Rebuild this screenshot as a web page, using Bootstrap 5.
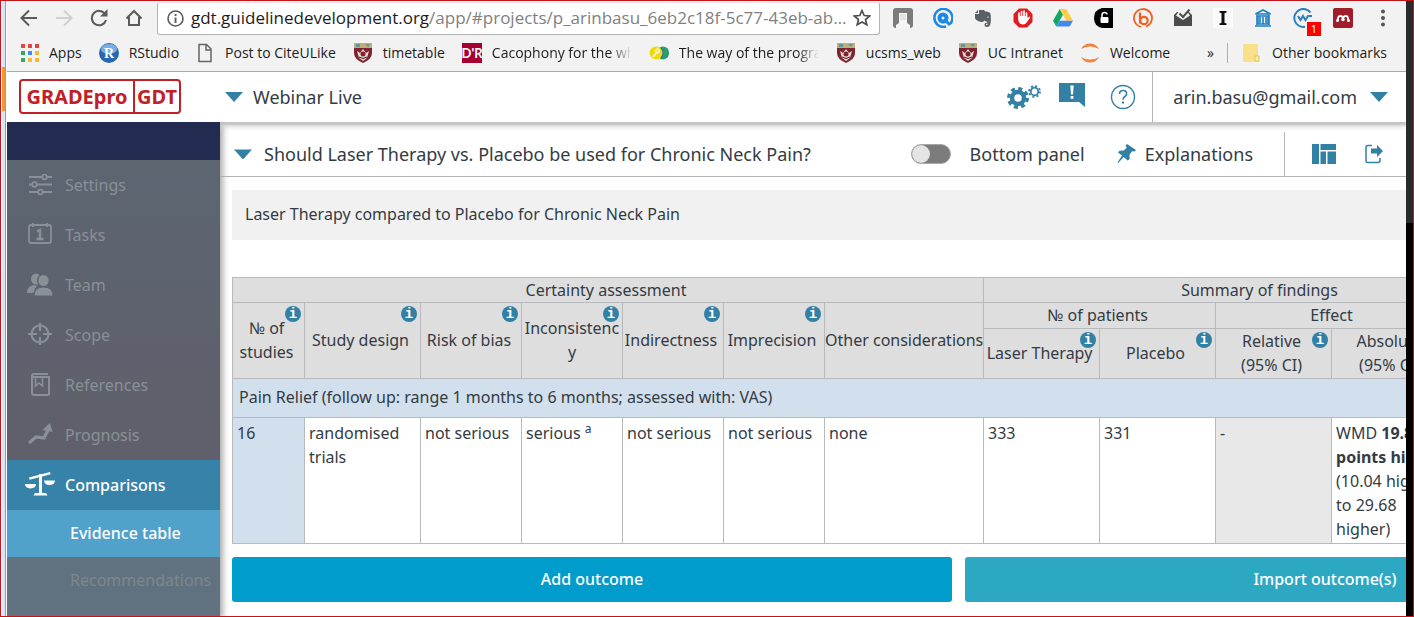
<!DOCTYPE html>
<html lang="en">
<head>
<meta charset="utf-8">
<meta name="viewport" content="width=device-width, initial-scale=1">
<title>GRADEpro GDT</title>
<link rel="stylesheet" href="https://cdn.jsdelivr.net/npm/bootstrap@5.3.0/dist/css/bootstrap.min.css">
<style>
  :root { --teal: #3380a5; --ink: #333b44; --line: #b5b5b5; }
  body { font: 16px/24px "Noto Sans", "Open Sans", sans-serif; color: var(--ink); border: 1px solid #c4141c; background: #fff; }
  button { font: inherit; color: inherit; border: 0; background: none; padding: 0; }
  a { color: inherit; text-decoration: none; }
  svg { display: block; flex: none; }
  .desk-left { width: 6px; flex: none; background: linear-gradient(90deg, #fff 0 1px, #d9e4f4 1px 4px, #9a9aa0 4px 5px, #fff 5px); position: relative; }
  .desk-left::before { content: ""; position: absolute; left: 1px; top: 66px; width: 3px; height: 44px; background: #ef9a3a; }
  .desk-right { width: 7px; flex: none; background: linear-gradient(#2a2a2c 0 222px, #000 222px); }

  .chrome-bar { background: #f2f2f2; border-bottom: 1px solid #a9a9a9; color: #1c1c1c; font-family: "Open Sans", sans-serif; }
  .tool-row { height: 34px; padding: 0 3px 0 5px; }
  .nav-btn { width: 35px; height: 32px; }
  .ext-btn { width: 40px; height: 32px; position: relative; }
  .ext-count { position: absolute; left: 24px; top: 20px; width: 14px; height: 14px; background: #f00; color: #fff; font-size: 11px; line-height: 14px; }
  .url-box { height: 33px; margin: 0 3px 0 5px; padding: 0 8px 0 9px; background: #fff; border: 1px solid #b4b4b4; border-top-color: #e4e4e4; border-radius: 3px; font-size: 17px; gap: 7px; }
  .url-rest { color: #808080; }
  .mark-row { height: 36px; padding: 0 19px 0 14px; font-size: 14px; }
  .mark-list { gap: 17px; }
  .mark-list a { gap: 10px; white-space: nowrap; }
  .fade-name { width: 140px; overflow: hidden; -webkit-mask-image: linear-gradient(90deg, #000 118px, transparent 140px); mask-image: linear-gradient(90deg, #000 118px, transparent 140px); }
  .mark-sep { width: 1px; height: 20px; background: #b0b0b0; margin: 0 14px 0 13px; }

  .app-head { height: 50px; position: relative; z-index: 2; background: #fff; box-shadow: 0 3px 2px #c4c4c4, 0 5px 5px #ddd; font-size: 18px; }
  .brand-box { margin-left: 12px; width: 162px; height: 35px; border: 2px solid #c02026; border-radius: 4px; color: #c02026; font-weight: 700; font-size: 20px; line-height: 31px; text-align: center; }
  .brand-box span:last-child { border-left: 2px solid #c02026; width: 46px; }
  .project { margin-left: 44px; gap: 10px; }
  .down-tri { width: 18px; height: 10px; background: var(--teal); clip-path: polygon(0 0, 100% 0, 50% 100%); flex: none; }
  .account { border-left: 1px solid var(--line); padding: 0 18px 0 20px; gap: 13px; }

  .side { width: 213px; flex: none; position: relative; z-index: 3; background: linear-gradient(#5b6671, #5f606c 300px); color: #8a9097; box-shadow: 3px 3px 6px #aaa; }
  .side-top { height: 38px; background: #232c50; }
  .side-item { height: 50px; padding-left: 19px; gap: 11px; }
  .side-item svg { width: 28px; }
  .side-sub { height: 47px; padding-left: 63px; }
  .side .on { background: #3682a8; color: #fff; }
  .side .on-sub { background: #51a2ca; color: #fff; }
  .side-tail { background: #60727f; color: #7d868d; flex: 1; }
  .mid { font-weight: 500; }

  .title-row { height: 55px; border-bottom: 1px solid var(--line); padding: 0 20px 0 14px; font-size: 18px; }
  .title-row > button, .title-row > .form-switch { padding-top: 11px; }
  .split { width: 1px; height: 44px; background: var(--line); align-self: flex-end; margin: 0 27px 0 31px; }
  .pin-btn { margin-left: 28px; }
  .panel-name { padding-left: 19px; }
  .form-switch .form-check-input.panel-switch { width: 40px; height: 20px; margin: 0; border: 1px solid #a8a8a8; background-color: #7c7c7c; background-image: url("data:image/svg+xml,%3Csvg xmlns='http://www.w3.org/2000/svg' viewBox='-4 -4 8 8'%3E%3Ccircle r='4' fill='%23e4e4e4'/%3E%3C/svg%3E"); }
  .canvas { padding: 13px 0 15px 12px; width: max-content; }
  .question { height: 50px; background: #f1f1f1; padding: 0 13px 2px; }
  .ev-table { table-layout: fixed; width: 1308px; margin: 37px 0 13px; border-collapse: collapse; }
  .ev-table th, .ev-table td { border: 1px solid #b7babd; }
  .ev-table th { background: #dedede; font-weight: 400; text-align: center; padding: 0 5px 0 1px; position: relative; }
  .ev-table td { padding: 3px 4px 2px; height: 126px; vertical-align: top; }
  .ev-table .outcome td { height: 39px; padding: 0 6px 2px; vertical-align: middle; background: #d2dfec; }
  .ev-table .r-a th { height: 25px; }
  .ev-table .r-b th { height: 26px; }
  .ev-table .r-c th { height: 50px; }
  .ev-table th.brk { word-break: break-all; padding: 0 2px; }
  .ev-table td.study-count { background: #d2dfec; }
  .ev-table td.no-effect { background: #e8e8e8; }
  .tip { position: absolute; top: 3px; right: 3px; width: 16px; height: 16px; border-radius: 50%; background: var(--teal); color: #fff; font: 700 14px/16px "Liberation Mono", monospace; }
  .ev-table sup { font-size: 12px; }
  .btn-line { gap: 13px; }
  .big-btn { width: 720px; height: 45px; border-radius: 3px; color: #fff; background: #009ccb; }
  .big-btn.alt { background: #2ca8c2; }
</style>
</head>
<body class="d-flex vh-100 overflow-hidden">
<svg width="0" height="0" class="position-absolute" aria-hidden="true">
  <symbol id="crest" viewBox="0 0 20 20">
    <path d="M1 0h18v10q0 6-9 10Q1 16 1 10z" fill="#7e2430"/><path d="M1 0h18v5H1z" fill="#c2ad72"/><path d="M3 1h4v3H3zM12 1h5l-2 3z" fill="#5d9aa0"/>
    <path d="M4 8l3 2 3-4 3 4 3-2-2 7-4 3-4-3z" fill="#ead8d0"/><circle cx="10" cy="11" r="2.5" fill="#7e2430"/><path d="M6 14q4 3 8 0" stroke="#4b1922" fill="none"/>
  </symbol>
</svg>
<div class="desk-left"></div>
<div class="d-flex flex-column flex-grow-1 overflow-hidden">

  <div class="chrome-bar">
    <div class="tool-row d-flex align-items-center">
      <button class="nav-btn d-flex align-items-center justify-content-center" aria-label="Back"><svg width="18" height="18" viewBox="0 0 18 18" fill="none" stroke="#5a5a5a" stroke-width="2"><path d="M17 9H2M9 1.500L1.500 9 9 16.500"/></svg></button>
      <button class="nav-btn d-flex align-items-center justify-content-center" aria-label="Forward"><svg width="18" height="18" viewBox="0 0 18 18" fill="none" stroke="#d0d0d0" stroke-width="2"><path d="M1 9h15M9 1.500L16.500 9 9 16.500"/></svg></button>
      <button class="nav-btn d-flex align-items-center justify-content-center" aria-label="Reload"><svg width="18" height="18" viewBox="0 0 18 18"><path d="M15 5A7.200 7.200 0 1 0 16 11" fill="none" stroke="#5a5a5a" stroke-width="2"/><path d="M17.500 0v7.500H10z" fill="#5a5a5a"/></svg></button>
      <button class="nav-btn d-flex align-items-center justify-content-center" aria-label="Home"><svg width="18" height="18" viewBox="0 0 18 18" fill="none" stroke="#5a5a5a" stroke-width="2"><path d="M1.500 9.500L9 2l7.500 7.500M4 8v8h10V8"/></svg></button>
      <div class="url-box d-flex align-items-center flex-grow-1 overflow-hidden">
        <svg width="17" height="17" viewBox="0 0 17 17"><circle cx="8.500" cy="8.500" r="7.500" fill="none" stroke="#5a5a5a" stroke-width="1.600"/><path d="M7.600 7.500h1.900V13H7.600zM7.600 4h1.900v2H7.600z" fill="#5a5a5a"/></svg>
        <div class="flex-grow-1 text-nowrap">gdt.guidelinedevelopment.org<span class="url-rest">/app/#projects/p_arinbasu_6eb2c18f-5c77-43eb-ab…</span></div>
        <svg width="18" height="18" viewBox="0 0 18 18" fill="none" stroke="#4d4d4d" stroke-width="1.700"><path d="M9 1.500l2.200 5 5.400.5-4.100 3.500 1.300 5.300L9 13l-4.800 2.800 1.300-5.300L1.400 7l5.400-.5z"/></svg>
      </div>
      <button class="ext-btn d-flex align-items-center justify-content-center" aria-label="Archive"><svg width="20" height="20" viewBox="0 0 20 20"><rect width="20" height="20" rx="3" fill="#7b7b7b"/><path d="M3 20v-3l3-2V5h8v10l3 2v3z" fill="#f5f5f5"/><path d="M7 6h6v6H7z" fill="#e2e2e2"/></svg></button>
      <button class="ext-btn d-flex align-items-center justify-content-center" aria-label="Search"><svg width="20" height="20" viewBox="0 0 20 20" fill="none" stroke="#1c88e5"><path d="M17 16a9 9 0 1 0-4 2.500" stroke-width="2.500"/><circle cx="10" cy="10" r="3.500" stroke-width="4"/><path d="M12 12l5 5" stroke-width="3"/></svg></button>
      <button class="ext-btn d-flex align-items-center justify-content-center" aria-label="Clipper"><svg width="18" height="18" viewBox="0 0 18 18" fill="#596066"><path d="M1 5h4V1h5q1 1.500 2 1.500 4 0 4.500 2.500 1 7-.5 11-.5 2-3 2-2.500 0-2.500-2.500 0-2 3-2v-1q-2 .5-3-1-1 1.500-3 1.500Q2 12 1 9z"/><path d="M1 4l3-3v3z"/><path d="M13 8.500q1-2 2 0z" fill="#fff"/><path d="M12 15.500q0-1 1.500-1V16H12z" fill="#fff"/></svg></button>
      <button class="ext-btn d-flex align-items-center justify-content-center" aria-label="Ad block"><svg width="20" height="20" viewBox="0 0 20 20"><path d="M6 .5h8L19.500 6v8L14 19.500H6L.5 14V6z" fill="#e11b22"/><path d="M6 8V5M8.500 8V3.500M11 8V3M13.500 8V5" stroke="#fff" stroke-width="1.700" stroke-linecap="round"/><path d="M5.200 8h9.100v2l2-1.500 1 .8-3.600 5.200Q12.500 16.500 10 16.500 5.200 16 5.200 11z" fill="#fff"/></svg></button>
      <button class="ext-btn d-flex align-items-center justify-content-center" aria-label="Drive"><svg width="20" height="18" viewBox="0 0 20 18"><path d="M6.700 0L0 11.700 3.300 17.500 10 5.800z" fill="#11a861"/><path d="M6.700 0h6.600L20 11.700h-6.700z" fill="#ffcf48"/><path d="M3.300 17.500L6.700 11.700H20l-3.300 5.800z" fill="#4387f5"/></svg></button>
      <button class="ext-btn d-flex align-items-center justify-content-center" aria-label="Open access"><svg width="19" height="20" viewBox="0 0 19 20"><path d="M19 0v20H8Q0 18 0 10T8 0z" fill="#000"/><rect x="6.500" y="9" width="8" height="6" rx="1" fill="#fff"/><path d="M8 9V7q0-2.500 2.500-2.500T13 6.500" stroke="#fff" stroke-width="1.500" fill="none"/></svg></button>
      <button class="ext-btn d-flex align-items-center justify-content-center" aria-label="Bitly"><svg width="20" height="20" viewBox="0 0 20 20" fill="none" stroke="#ee6123"><path d="M13 18.500A9 9 0 1 0 8 18.800" stroke-width="1.800"/><path d="M7 4.500v11" stroke-width="2.300"/><circle cx="11" cy="12.500" r="3.700" stroke-width="2.200"/></svg></button>
      <button class="ext-btn d-flex align-items-center justify-content-center" aria-label="Mail checker"><svg width="18" height="18" viewBox="0 0 18 18"><path d="M0 6l3-3h12l3 3v11H0z" fill="#4b4b4b"/><path d="M2 6.500L4.500 3h9L16 6.500 9 11z" fill="#f2f2f2"/><path d="M5.500 4.500L9 8l6.500-7.500" fill="none" stroke="#4b4b4b" stroke-width="2"/></svg></button>
      <button class="ext-btn d-flex align-items-center justify-content-center" aria-label="Instapaper"><svg width="20" height="20" viewBox="0 0 20 20"><path d="M0 0h20v20H0z" fill="#fbfbfb"/><path d="M6.500 3h7v1.500l-2 .7v9.600l2 .7V17h-7v-1.500l2-.7V5.200l-2-.7z" fill="#111"/></svg></button>
      <button class="ext-btn d-flex align-items-center justify-content-center" aria-label="Library"><svg width="18" height="18" viewBox="0 0 18 18" fill="none" stroke="#1c80c4" stroke-width="1.600"><path d="M1.500 5L9 1l7.500 4zM1 17h16M3 6v10M15 6v10M6 7.500v7M12 7.500v7M9 8v7"/><path d="M4 7h10v8H4z"/></svg></button>
      <button class="ext-btn d-flex align-items-center justify-content-center" aria-label="Word tool"><svg width="20" height="20" viewBox="0 0 20 20" fill="none" stroke="#2c7fc0"><path d="M17.500 4.500A9 9 0 1 0 12 18.800" stroke-width="2"/><path d="M5 8l2.500 4L10 8l2.500 4L15 8h4" stroke-width="2"/></svg><span class="ext-count">1</span></button>
      <button class="ext-btn d-flex align-items-center justify-content-center" aria-label="Mendeley"><svg width="20" height="20" viewBox="0 0 20 20"><rect width="20" height="20" rx="2" fill="#a01d2a"/><path d="M5 13q-.5-5 2-5t3 2q.5-2 3-2t2 5" fill="none" stroke="#fff" stroke-width="2"/><circle cx="10" cy="11.500" r="1.800" fill="#fff"/><circle cx="4.500" cy="12.500" r="1.500" fill="#fff"/><circle cx="15.500" cy="12.500" r="1.500" fill="#fff"/></svg></button>
      <button class="ext-btn d-flex align-items-center justify-content-center" aria-label="Menu"><svg width="4" height="18" viewBox="0 0 4 18" fill="#555"><circle cx="2" cy="2.500" r="2"/><circle cx="2" cy="9" r="2"/><circle cx="2" cy="15.500" r="2"/></svg></button>
    </div>
    <div class="mark-row d-flex align-items-center">
      <nav class="mark-list d-flex flex-grow-1">
        <a href="#" class="d-flex align-items-center"><svg width="18" height="18" viewBox="0 0 18 18"><path d="M0 0h4v4H0zM7 0h4v4H7zM14 0h4v4h-4z" fill="#e8453c"/><path d="M0 7h4v4H0z" fill="#3aa757"/><path d="M7 7h4v4H7z" fill="#4688f1"/><path d="M14 7h4v4h-4zM14 14h4v4h-4zM7 14h4v4H7z" fill="#f9bb2d"/><path d="M0 14h4v4H0z" fill="#3aa757"/></svg>Apps</a>
        <a href="#" class="d-flex align-items-center"><svg width="20" height="20" viewBox="0 0 20 20"><circle cx="10" cy="10" r="10" fill="#2767ad"/><ellipse cx="10" cy="6" rx="8" ry="5" fill="#7baee2"/><text x="10" y="15" text-anchor="middle" font-family="Liberation Serif, serif" font-weight="700" font-size="14" fill="#fff">R</text></svg>RStudio</a>
        <a href="#" class="d-flex align-items-center"><svg width="19" height="20" viewBox="0 0 19 20" fill="none" stroke="#666" stroke-width="1.500"><path d="M3 1.500h7.500L15 6v12.500H3zM10 1.500V7h5"/></svg>Post to CiteULike</a>
        <a href="#" class="d-flex align-items-center"><svg width="20" height="20"><use href="#crest"/></svg>timetable</a>
        <a href="#" class="d-flex align-items-center"><svg width="20" height="20" viewBox="0 0 20 20"><path d="M0 0h20v20H0z" fill="#a5002f"/><text x="10" y="15" text-anchor="middle" font-family="Lato, sans-serif" font-weight="700" font-size="13" fill="#fff">D'R</text></svg><span class="fade-name">Cacophony for the wh</span></a>
        <a href="#" class="d-flex align-items-center"><svg width="20" height="20" viewBox="0 0 20 20"><rect x="8" y="3.500" width="12" height="13" rx="6" fill="#2b9b70"/><path d="M12 4q5 6 0 12z" fill="#226fae"/><circle cx="7" cy="10" r="6.500" fill="#f3d90b"/><path d="M4 14l4-5" stroke="#fff" stroke-width="1.500"/><circle cx="8.500" cy="8" r="1.800" fill="none" stroke="#fff" stroke-width="1.300"/></svg><span class="fade-name">The way of the progra</span></a>
        <a href="#" class="d-flex align-items-center"><svg width="20" height="20"><use href="#crest"/></svg>ucsms_web</a>
        <a href="#" class="d-flex align-items-center"><svg width="20" height="20"><use href="#crest"/></svg>UC Intranet</a>
        <a href="#" class="d-flex align-items-center"><svg width="20" height="20" viewBox="0 0 20 20" fill="#f08540"><path d="M1 6Q4 .5 10 .5T19 6Q15 3.500 10 3.500T1 6zM1 14q3 5.500 9 5.500T19 14q-4 2.500-9 2.500T1 14z"/></svg>Welcome</a>
      </nav>
      <button aria-label="More bookmarks">»</button>
      <span class="mark-sep"></span>
      <a href="#" class="d-flex align-items-center gap-2"><svg width="18" height="20" viewBox="0 0 18 20"><path d="M1 1h15v13l1 1v4H1z" fill="#fbe08a"/><path d="M13 13h4v5h-4z" fill="#fdeeb5" stroke="#e8c24f"/></svg><span class="ps-1">Other bookmarks</span></a>
    </div>
  </div>

  <header class="app-head d-flex align-items-center">
    <a href="#" class="brand-box d-flex"><span class="flex-grow-1">GRADEpro</span><span>GDT</span></a>
    <button class="project d-flex align-items-center flex-grow-1"><span class="down-tri"></span>Webinar Live</button>
    <button class="me-3" aria-label="Preferences"><svg width="36" height="26" viewBox="0 0 36 26" fill="none" stroke="#3380a5"><circle cx="12" cy="14" r="6" stroke-width="4.500"/><circle cx="12" cy="14" r="9.300" stroke-width="3.400" stroke-dasharray="4 3.300"/><circle cx="28.500" cy="7.500" r="3.800" stroke-width="1.800"/><circle cx="28.500" cy="7.500" r="5.500" stroke-width="1.800" stroke-dasharray="2 2.320"/></svg></button>
    <button class="me-4 pb-1" aria-label="Feedback"><svg width="28" height="26" viewBox="0 0 28 26"><path d="M1 1h26v24l-6-5H1z" fill="#3380a5"/><path d="M12.300 3.500h3.400l-.7 9h-2zM12.600 14h2.800v2.800h-2.800z" fill="#fff"/></svg></button>
    <button class="me-3" aria-label="Help"><svg width="26" height="26" viewBox="0 0 26 26" fill="none" stroke="#3380a5"><circle cx="13" cy="13" r="11.500" stroke-width="1.400"/><path d="M9.500 10q0-3.500 3.600-3.500t3.500 3.200q0 2-2 3-1.600.9-1.600 3" stroke-width="1.600"/><path d="M12 17.500h2v2h-2z" fill="#3380a5" stroke="none"/></svg></button>
    <button class="account d-flex align-items-center h-100">arin.basu@gmail.com<span class="down-tri"></span></button>
  </header>

  <div class="d-flex flex-grow-1 overflow-hidden">
    <nav class="side d-flex flex-column">
      <div class="side-top"></div>
      <a href="#" class="side-item d-flex align-items-center"><svg height="24" viewBox="0 0 28 24" fill="none" stroke="#8a9097" stroke-width="1.800"><path d="M3 4h13M21 4h5M3 11.500h3M11 11.500h15M3 19h9M17 19h9"/><circle cx="18.500" cy="4" r="2.300"/><circle cx="8.500" cy="11.500" r="2.300"/><circle cx="14.500" cy="19" r="2.300"/></svg>Settings</a>
      <a href="#" class="side-item d-flex align-items-center"><svg height="24" viewBox="0 0 28 24" fill="none" stroke="#8a9097" stroke-width="1.800"><rect x="3" y="2" width="22" height="18" rx="2"/><path d="M7 0v4M11 2h6M21 0v4"/><path d="M11 8.500l3-1.500v9M10.500 16h7" stroke-width="2.400"/></svg>Tasks</a>
      <a href="#" class="side-item d-flex align-items-center"><svg height="24" viewBox="0 0 28 24" fill="#8a9097"><ellipse cx="10" cy="6" rx="5" ry="5.500"/><path d="M1 20q0-7 7-8l3 1q-3 3-3.500 7z"/><ellipse cx="17.500" cy="7.500" rx="5.800" ry="6.200" stroke="#5c6470" stroke-width="1.400"/><path d="M8 23q0-9 9.500-9t9.500 9z" stroke="#5c6470"/></svg>Team</a>
      <a href="#" class="side-item d-flex align-items-center"><svg height="24" viewBox="0 0 28 24" fill="none" stroke="#8a9097" stroke-width="2.200"><circle cx="14" cy="11" r="8.500"/><path d="M14 0v8M14 14v8M2 11h9M17 11h9"/></svg>Scope</a>
      <a href="#" class="side-item d-flex align-items-center"><svg height="24" viewBox="0 0 28 24" fill="none" stroke="#8a9097" stroke-width="2"><path d="M6 3v17q0 2 2 2h14q1 0 1-1V4H8Q6 4 6 2.500T8 1h14"/><path d="M9.500 4v9l3.500-3 3.500 3V4" stroke-width="1.600"/></svg>References</a>
      <a href="#" class="side-item d-flex align-items-center"><svg height="24" viewBox="0 0 28 24" fill="none" stroke="#8a9097" stroke-width="3.200"><path d="M3 20l7-6 8 1 4.500-9"/><path d="M16.500 7L24 0l2.500 9z" fill="#8a9097" stroke="none"/></svg>Prognosis</a>
      <a href="#" class="side-item on d-flex align-items-center"><svg height="26" viewBox="0 0 28 26" fill="#fff" class="overflow-visible"><path d="M3 5.500L24 0l.6 2.200L3.600 7.700z"/><path d="M13 2h3v19h4l1.500 2.500h-14L9 21h4z"/><path d="M-1 12h11q0 4-5.500 4.500Q-1 16-1 12zM18 8.500h11q-.5 4.500-5.500 4.500T18 8.500z"/></svg><span class="mid">Comparisons</span></a>
      <a href="#" class="side-sub on-sub d-flex align-items-center mid">Evidence table</a>
      <div class="side-tail"><a href="#" class="side-sub d-flex align-items-center">Recommendations</a></div>
    </nav>

    <main class="flex-grow-1 overflow-hidden">
      <div class="title-row d-flex align-items-center">
        <button class="d-flex align-items-center flex-grow-1 gap-2"><span class="down-tri"></span><span class="ps-1">Should Laser Therapy vs. Placebo be used for Chronic Neck Pain?</span></button>
        <div class="form-check form-switch d-flex align-items-center mb-0 ps-0">
          <input class="form-check-input panel-switch" type="checkbox" role="switch" id="bottomPanel">
          <label class="panel-name" for="bottomPanel">Bottom panel</label>
        </div>
        <button class="pin-btn d-flex align-items-center"><svg width="28" height="22" viewBox="0 0 28 22" fill="#3380a5"><path d="M14 1l9 6-1.500 1.500-2.500-.2-2.500 3.400.2 4.300-2 1.500-4-3.500-5.500 6-.7-.6 4.500-7-4-3 1.500-1.700 4.300-.2 3-3L12.500 3z"/></svg><span class="ps-1">Explanations</span></button>
        <span class="split"></span>
        <button class="me-4" aria-label="Layout"><svg width="24" height="20" viewBox="0 0 24 20" fill="#3380a5"><path d="M0 0h7v20H0zM8.500 0H24v6H8.500zM8.500 7.500H14V20H8.500zM15.500 7.500H24V20h-8.500z"/></svg></button>
        <button class="ps-1" aria-label="Export"><svg width="22" height="20" viewBox="0 0 22 20"><path d="M8 1.500H4q-2 0-2 2v13q0 2 2 2h10q2 0 2-2V14" fill="none" stroke="#3380a5" stroke-width="1.500"/><path d="M7 4.500h6V1l6 6-6 6V9.500H7z" fill="#3380a5"/></svg></button>
      </div>
      <div class="canvas">
        <div class="question d-flex align-items-center">Laser Therapy compared to Placebo for Chronic Neck Pain</div>
        <table class="ev-table">
          <colgroup><col style="width:72px"><col style="width:116px"><col style="width:101px"><col style="width:101px"><col style="width:101px"><col style="width:101px"><col style="width:159px"><col style="width:116px"><col style="width:116px"><col style="width:116px"><col style="width:120px"><col></colgroup>
          <thead>
            <tr class="r-a"><th colspan="7">Certainty assessment</th><th colspan="5">Summary of findings</th></tr>
            <tr class="r-b">
              <th rowspan="2">№ of studies<button class="tip" aria-label="Info">i</button></th>
              <th rowspan="2">Study design<button class="tip" aria-label="Info">i</button></th>
              <th rowspan="2">Risk of bias<button class="tip" aria-label="Info">i</button></th>
              <th rowspan="2" class="brk">Inconsistency<button class="tip" aria-label="Info">i</button></th>
              <th rowspan="2">Indirectness<button class="tip" aria-label="Info">i</button></th>
              <th rowspan="2">Imprecision<button class="tip" aria-label="Info">i</button></th>
              <th rowspan="2" class="px-0 text-nowrap">Other considerations</th>
              <th colspan="2">№ of patients</th><th colspan="2">Effect</th><th rowspan="2"></th>
            </tr>
            <tr class="r-c">
              <th>Laser Therapy<button class="tip" aria-label="Info">i</button></th>
              <th>Placebo<button class="tip" aria-label="Info">i</button></th>
              <th>Relative<br>(95% CI)<button class="tip" aria-label="Info">i</button></th>
              <th>Absolute<br>(95% CI)</th>
            </tr>
          </thead>
          <tbody>
            <tr class="outcome"><td colspan="12">Pain Relief (follow up: range 1 months to 6 months; assessed with: VAS)</td></tr>
            <tr>
              <td class="study-count">16</td><td>randomised trials</td><td class="text-nowrap">not serious</td><td class="text-nowrap">serious <sup>a</sup></td><td class="text-nowrap">not serious</td><td class="text-nowrap">not serious</td><td>none</td><td>333</td><td>331</td><td class="no-effect">-</td>
              <td>WMD <b>19.86 points higher</b><br>(10.04 higher to 29.68 higher)</td><td></td>
            </tr>
          </tbody>
        </table>
        <div class="btn-line d-flex">
          <button class="big-btn mid">Add outcome</button>
          <button class="big-btn alt mid">Import outcome(s)</button>
        </div>
      </div>
    </main>
  </div>
</div>
<div class="desk-right"></div>
<script src="https://cdn.jsdelivr.net/npm/bootstrap@5.3.0/dist/js/bootstrap.bundle.min.js"></script>
</body>
</html>
